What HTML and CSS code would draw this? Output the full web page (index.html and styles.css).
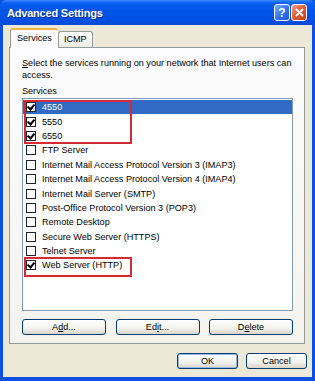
FILE: index.html
```html
<!DOCTYPE html>
<html lang="en">
<head>
    <meta charset="UTF-8">
    <title>Advanced Settings</title>
    <link rel="stylesheet" href="styles.css">
</head>
<body>

    <div class="window">
        <!-- Barra de titulo -->
        <div class="titlebar">
            <span class="title">Advanced Settings</span>
            <div class="caption-btns">
                <span class="cap-btn help">?</span>
                <span class="cap-btn close">
                    <svg width="9" height="9" viewBox="0 0 9 9"><path d="M1 1 L8 8 M8 1 L1 8" stroke="#fff" stroke-width="1.8" fill="none"/></svg>
                </span>
            </div>
        </div>

        <div class="client">
            <div class="tabs">
                <div class="tab active">Services</div>
                <div class="tab">ICMP</div>
            </div>

            <div class="panel">
                <p class="intro"><u>S</u>elect the services running on your network that Internet users can<br>access.</p>
                <div class="label">Services</div>

                <div class="listbox">
                    <div class="row selected"><span class="check on"></span>4550</div>
                    <div class="row"><span class="check on"></span>5550</div>
                    <div class="row"><span class="check on"></span>6550</div>
                    <div class="row"><span class="check"></span>FTP Server</div>
                    <div class="row"><span class="check"></span>Internet Mail Access Protocol Version 3 (IMAP3)</div>
                    <div class="row"><span class="check"></span>Internet Mail Access Protocol Version 4 (IMAP4)</div>
                    <div class="row"><span class="check"></span>Internet Mail Server (SMTP)</div>
                    <div class="row"><span class="check"></span>Post-Office Protocol Version 3 (POP3)</div>
                    <div class="row"><span class="check"></span>Remote Desktop</div>
                    <div class="row"><span class="check"></span>Secure Web Server (HTTPS)</div>
                    <div class="row"><span class="check"></span>Telnet Server</div>
                    <div class="row"><span class="check on"></span>Web Server (HTTP)</div>

                    <!-- marcas rojas -->
                    <div class="mark mark-a"></div>
                    <div class="mark mark-b"></div>
                </div>

                <div class="btn-row">
                    <button class="btn wide">A<u>d</u>d...</button>
                    <button class="btn wide">Ed<u>i</u>t...</button>
                    <button class="btn wide">D<u>e</u>lete</button>
                </div>
            </div>

            <div class="footer">
                <button class="btn small default">OK</button>
                <button class="btn small">Cancel</button>
            </div>
        </div>
    </div>

</body>
</html>
```

FILE: styles.css
```css
/* Estilos generales */
body {
    margin: 0;
    padding: 0;
    font-family: "Liberation Sans", Arial, sans-serif;
    font-size: 9.1px;
    color: #000;
    background: #fff;
}

.window {
    width: 315px;
    height: 381px;
    display: flex;
    flex-direction: column;
    background: #0b4fe0;
}

/* Barra de titulo */
.titlebar {
    height: 25px;
    flex: none;
    display: flex;
    align-items: center;
    justify-content: space-between;
    padding: 0 8px 0 7px;
    box-sizing: border-box;
    border-radius: 6px 6px 0 0;
    background: linear-gradient(#3a8cfb 0%, #0a5ff0 12%, #0055e8 45%, #0050e2 80%, #0a49d4 100%);
}

.title {
    color: #fff;
    font-weight: bold;
    font-size: 11px;
    letter-spacing: -0.2px;
    text-shadow: 1px 1px 0 #0a2a8a;
}

.caption-btns {
    display: flex;
    gap: 1px;
}

.cap-btn {
    width: 14px;
    height: 15px;
    border: 1px solid #fff;
    border-radius: 3px;
    display: flex;
    align-items: center;
    justify-content: center;
    color: #fff;
    font-weight: bold;
    font-size: 12px;
    box-sizing: content-box;
}

.cap-btn.help {
    background: linear-gradient(135deg, #7db2ff, #2f6ff0 55%, #1e58d8);
}

.cap-btn.close {
    background: linear-gradient(135deg, #f2a088, #e2582f 50%, #c93f1c);
}

/* Area cliente */
.client {
    flex: 1;
    margin: 0 3px 4px 3px;
    background: #ece9d8;
    display: flex;
    flex-direction: column;
}

.tabs {
    display: flex;
    align-items: flex-end;
    height: 19px;
    padding: 0 0 0 7px;
    margin-top: 3px;
    position: relative;
    z-index: 1;
}

.tab {
    height: 15px;
    line-height: 15px;
    padding: 0 5px;
    border: 1px solid #919b9c;
    border-bottom: none;
    border-radius: 3px 3px 0 0;
    background: linear-gradient(#ffffff, #eceae2);
}

.tab.active {
    height: 18px;
    line-height: 17px;
    padding: 0 6px;
    border-top: 2px solid #f5b53a;
    border-right: none;
    background: #fcfcfe;
    margin-bottom: -1px;
}

.panel {
    margin: 0 7px 0 6px;
    border: 1px solid #919b9c;
    background: linear-gradient(#fcfcfe, #f4f3ee);
    padding: 9px 11px 8px 12px;
    display: flex;
    flex-direction: column;
}

.intro {
    margin: 0;
    line-height: 12px;
    white-space: nowrap;
}

.label {
    margin-top: 4px;
    line-height: 12px;
}

/* Lista de servicios */
.listbox {
    position: relative;
    margin-top: 1px;
    height: 213px;
    box-sizing: border-box;
    border: 1px solid #7f9db9;
    background: #fff;
    padding-top: 1px;
}

.row {
    height: 14.4px;
    display: flex;
    align-items: center;
    padding-left: 3px;
    white-space: nowrap;
}

.row.selected {
    background: #316ac5;
    color: #fff;
}

.check {
    width: 8px;
    height: 8px;
    border: 1px solid #1c2430;
    background: #fff;
    margin-right: 6px;
    flex: none;
    position: relative;
}

.check.on::after {
    content: "";
    position: absolute;
    left: 1px;
    top: 0px;
    width: 3px;
    height: 5px;
    border-right: 2px solid #000;
    border-bottom: 2px solid #000;
    transform: rotate(40deg);
    transform-origin: 60% 60%;
}

.mark {
    position: absolute;
    border: 2px solid #d42a34;
    box-sizing: border-box;
}

.mark-a {
    left: 1px;
    top: 1px;
    width: 108px;
    height: 44px;
}

.mark-b {
    left: 1px;
    top: 158px;
    width: 108px;
    height: 20px;
}

/* Botones */
.btn-row {
    display: flex;
    justify-content: space-between;
    margin-top: 8px;
}

.btn {
    font-family: "Liberation Sans", Arial, sans-serif;
    font-size: 9.1px;
    color: #000;
    height: 16px;
    padding: 0;
    border: 1px solid #003c74;
    border-radius: 3px;
    background: linear-gradient(#ffffff, #f3f2ec 60%, #d8d4c8);
    box-sizing: border-box;
}

.btn.wide {
    width: 84px;
}

.btn.small {
    width: 61px;
}

.btn.default {
    box-shadow: inset 0 0 0 1px #98b8ea;
}

.footer {
    display: flex;
    justify-content: flex-end;
    gap: 8px;
    margin: 9px 5px 0 0;
}
```
